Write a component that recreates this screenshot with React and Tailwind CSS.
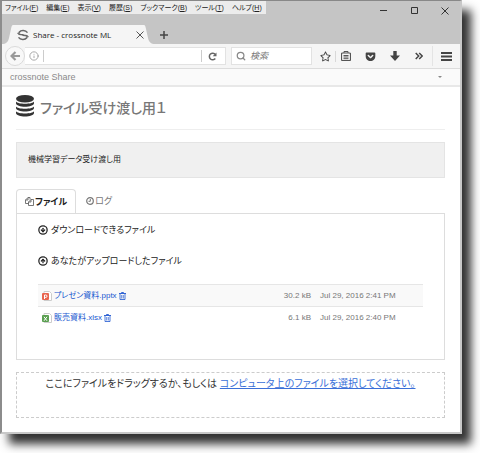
import { FaGetPocket, FaRegStar } from "react-icons/fa";
import { CircleArrowDown, CircleArrowUp, Info, Search } from "lucide-react";

const menus = [
  { label: "ファイル", accessKey: "F" },
  { label: "編集", accessKey: "E" },
  { label: "表示", accessKey: "V" },
  { label: "履歴", accessKey: "S" },
  { label: "ブックマーク", accessKey: "B" },
  { label: "ツール", accessKey: "T" },
  { label: "ヘルプ", accessKey: "H" },
];

const files = [
  { name: "プレゼン資料.pptx", type: "pptx", size: "30.2 kB", date: "Jul 29, 2016 2:41 PM" },
  { name: "販売資料.xlsx", type: "xlsx", size: "6.1 kB", date: "Jul 29, 2016 2:40 PM" },
];

function CrossnoteLogo() {
  return (
    <svg viewBox="0 0 12 12" className="w-3 h-3 shrink-0" fill="none" stroke="#666">
      <path d="M10.500 3.600C8.500 1 4 .8 2.200 3.300 1.400 4.600 2 5.400 3.600 5.600L6.500 5.800" strokeWidth="1.500" />
      <path d="M1.500 8.400c2 2.600 6.500 2.800 8.300.3.800-1.300.2-2.100-1.400-2.300l-2.900-.2" strokeWidth="1.500" />
      <path d="m.3 4.200 2 1.300M11.700 7.800l-2-1.300" />
    </svg>
  );
}

function DatabaseIcon() {
  return (
    <svg viewBox="0 0 18 22" className="w-[18px] h-[22px] shrink-0" fill="#333">
      <ellipse cx="9" cy="3.800" rx="9" ry="3.800" />
      <path d="M0 6.600c1.500 3 16.500 3 18 0v1.600c0 4.600-18 4.600-18 0z" />
      <path d="M0 11.400c1.500 3 16.500 3 18 0V13c0 4.600-18 4.600-18 0z" />
      <path d="M0 16.200c1.500 3 16.500 3 18 0v1.800c0 4.600-18 4.600-18 0z" />
    </svg>
  );
}

function CopyIcon() {
  return (
    <svg viewBox="0 0 9 9" className="w-[9px] h-[9px] shrink-0" fill="none" stroke="#555" strokeWidth=".8">
      <path d="M3.500 6.500h-3V3L3 .5h2v2M.5 3H3V.5" />
      <path d="M3.500 5 6 2.500h2.500v6h-5zM3.500 5H6V2.500" />
    </svg>
  );
}

function ClockIcon() {
  return (
    <svg viewBox="0 0 8 8" className="w-2 h-2 shrink-0" fill="none" stroke="currentColor">
      <circle cx="4" cy="4" r="3.300" strokeWidth="1.200" />
      <path d="M4.300 2v2.300H2.500" />
    </svg>
  );
}

function TrashIcon() {
  return (
    <svg viewBox="0 0 7 8" className="w-[7px] h-2" fill="none" stroke="currentColor">
      <path d="M0 1.500h7M2.500 1.500v-1h2v1" strokeWidth=".9" />
      <path d="M1 1.500v6h5v-6" strokeWidth=".8" />
      <path d="M2.700 3v3.500M4.300 3v3.500" strokeWidth=".7" />
    </svg>
  );
}

function FileTypeIcon({ type }) {
  const color = type === "pptx" ? "#e8654f" : "#5a9f50";
  return (
    <svg viewBox="0 0 10 10" className="w-[10px] h-[10px] shrink-0">
      <path d="M2 .5h5.500l2 2v7H2z" fill="#fff" stroke="#ccc" />
      <rect x="0" y="2" width="7" height="7" rx="1" fill={color} />
      {type === "pptx" ? (
        <path d="M2.500 8V4h1.300a1.200 1.200 0 0 1 0 2.400H2.500" fill="none" stroke="#fff" />
      ) : (
        <path d="m2 3.800 3 4M5 3.800l-3 4" fill="none" stroke="#fff" />
      )}
    </svg>
  );
}

function TitleBar() {
  return (
    <header className="flex justify-between items-start bg-[#c5c5c5]">
      <div>
        <nav className="flex w-max gap-2 h-[13px] items-center bg-[#ececec] pl-[3px] pr-1 text-[7px] leading-[12px] text-[#222]">
          {menus.map((menu) => (
            <button key={menu.label} type="button" className="whitespace-nowrap">
              {menu.label}(<u>{menu.accessKey}</u>)
            </button>
          ))}
        </nav>
        <div className="flex items-end mt-[11px]">
          <svg viewBox="0 0 11 19" className="w-[11px] h-[19px] shrink-0" fill="#f5f5f5">
            <path d="M11 0v19H0c4 0 6-2 7-6L9 4c.5-2.500 1-4 2-4z" />
          </svg>
          <div className="flex items-center h-[19px] w-[131px] bg-[#f5f5f5] pl-1 text-[8px] leading-[12px] text-[#222]">
            <CrossnoteLogo />
            <span className="ml-1 whitespace-nowrap font-['Open_Sans','Noto_Sans',sans-serif]">
              Share - crossnote ML
            </span>
            <button type="button" aria-label="Close tab" className="ml-auto">
              <svg viewBox="0 0 8 8" className="w-2 h-2" stroke="#555">
                <path d="m.5.500 7 7m0-7-7 7" />
              </svg>
            </button>
          </div>
          <svg viewBox="0 0 11 19" className="w-[11px] h-[19px] shrink-0" fill="#f5f5f5">
            <path d="M0 0v19h11c-4 0-6-2-7-6L2 4C1.500 1.500 1 0 0 0z" />
          </svg>
          <button type="button" aria-label="New tab" className="self-center ml-[5px]">
            <svg viewBox="0 0 8 8" className="w-2 h-2" stroke="#444" strokeWidth="1.500">
              <path d="M4 0v8M0 4h8" />
            </svg>
          </button>
        </div>
      </div>
      <div className="flex items-center gap-[23px] pt-[6px] pr-[11px]">
        <button type="button" aria-label="Minimize">
          <svg viewBox="0 0 8 8" className="w-2 h-2" stroke="#333">
            <path d="M1 3.500h7" />
          </svg>
        </button>
        <button type="button" aria-label="Maximize">
          <svg viewBox="0 0 8 8" className="w-2 h-2" fill="none" stroke="#333">
            <path d="M1.500.5h6v6h-6z" />
          </svg>
        </button>
        <button type="button" aria-label="Close window">
          <svg viewBox="0 0 8 8" className="w-2 h-2" stroke="#333">
            <path d="m.5.500 7 7m0-7-7 7" />
          </svg>
        </button>
      </div>
    </header>
  );
}

function Toolbar() {
  return (
    <div className="flex items-center h-[25px] bg-[#f5f5f5] border-b border-[#dcdcdc] pl-[3px] pr-2 text-[#444]">
      <button
        type="button"
        aria-label="Back"
        className="flex items-center justify-center w-5 h-5 shrink-0 rounded-full border border-[#dadada] bg-[#f8f8f8]"
      >
        <svg viewBox="0 0 10 10" className="w-[10px] h-[10px]" fill="none" stroke="#999" strokeWidth="2.200">
          <path d="M5.500 1 1.500 5l4 4M2 5h8" />
        </svg>
      </button>
      <div className="flex flex-1 min-w-0 items-center h-[18px] bg-white border-y border-r border-[#e2e2e2] pl-1 pr-2">
        <Info size={10} color="#999" className="shrink-0" />
        <input
          type="text"
          aria-label="Address"
          className="flex-1 min-w-0 h-3 ml-1 border-x border-[#ccc] outline-none text-[9px]"
        />
        <button type="button" aria-label="Reload" className="ml-[6px]">
          <svg viewBox="0 0 9 9" className="w-[9px] h-[9px]" fill="none" stroke="#666" strokeWidth="1.500">
            <path d="M7.300 6.500a3.300 3.300 0 1 1 0-4" />
            <path d="M8.500.5v3.800H4.700z" fill="#666" stroke="none" />
          </svg>
        </button>
      </div>
      <label className="flex items-center w-[81px] h-[18px] shrink-0 bg-white border border-[#e2e2e2] ml-[5px] pl-[4px]">
        <Search size={10} color="#888" strokeWidth={3} className="shrink-0" />
        <input
          type="search"
          aria-label="検索"
          placeholder="検索"
          className="w-full min-w-0 ml-1 text-[9px] leading-[12px] italic outline-none placeholder:text-[#777]"
        />
      </label>
      <button type="button" aria-label="Bookmark" className="ml-2 pr-[4px] border-r border-[#d8d8d8]">
        <FaRegStar size={11} />
      </button>
      <button type="button" aria-label="Bookmark list" className="ml-[5px]">
        <svg viewBox="0 0 10 10" className="w-[10px] h-[10px]" fill="none" stroke="#555">
          <rect x=".5" y="2" width="9" height="7.500" rx="1" strokeWidth="1.200" />
          <path d="M3 2V.5h4V2M2.500 4.500h5M2.500 6h5M2.500 7.700h5" />
        </svg>
      </button>
      <button type="button" aria-label="Pocket" className="ml-[14px]">
        <FaGetPocket size={11} />
      </button>
      <button type="button" aria-label="Downloads" className="ml-[14px]">
        <svg viewBox="0 0 10 10" className="w-[10px] h-[10px]" fill="#444">
          <path d="M3.300 0h3.400v4.500H10L5 10 0 4.500h3.300z" />
        </svg>
      </button>
      <button type="button" aria-label="More tools" className="ml-[15px]">
        <svg viewBox="0 0 8 8" className="w-2 h-2" fill="none" stroke="#444" strokeWidth="1.500">
          <path d="m.7 1 3 3-3 3M4.200 1l3 3-3 3" />
        </svg>
      </button>
      <button type="button" aria-label="Menu" className="h-5 ml-[9px] pl-[8px] border-l border-[#e4e4e4]">
        <svg viewBox="0 0 11 9" className="w-[11px] h-[9px]" stroke="#444" strokeWidth="2">
          <path d="M0 1h11M0 4.500h11M0 8h11" />
        </svg>
      </button>
    </div>
  );
}

function FileTable() {
  return (
    <table className="w-full text-[8px] leading-[12px] text-[#777]">
      <tbody>
        {files.map((file) => (
          <tr key={file.name} className="h-[22px] odd:bg-[#f9f9f9] odd:border-y border-[#e6e6e6]">
            <td className="pl-1">
              <div className="flex items-center gap-[2px] text-[#2058d0]">
                <FileTypeIcon type={file.type} />
                <a href="#file" className="whitespace-nowrap">
                  {file.name}
                </a>
                <button type="button" aria-label={`Delete ${file.name}`}>
                  <TrashIcon />
                </button>
              </div>
            </td>
            <td className="w-[60px] text-right whitespace-nowrap">{file.size}</td>
            <td className="w-[112px] pl-[9px] whitespace-nowrap">{file.date}</td>
          </tr>
        ))}
      </tbody>
    </table>
  );
}

export default function App() {
  return (
    <div className="min-h-screen overflow-hidden bg-white pr-[18px] pb-[19px] font-['Liberation_Sans','Noto_Sans_CJK_JP',sans-serif] [font-feature-settings:'palt']">
      <div className="bg-white border-t border-l-2 border-r-2 border-b-2 border-t-[#888] border-l-[#8c8c8c] border-r-[#c8c8c8] border-b-[#c8c8c8] shadow-[9px_10px_9px_#333]">
        <TitleBar />
        <Toolbar />

        {/* Site header */}
        <div className="flex items-center justify-between h-[18px] bg-[#fafafa] border-b-2 border-[#e8e8e8] pl-2 pr-[18px] text-[9px] leading-[12px] text-[#8a8a8a]">
          <a href="#home">crossnote Share</a>
          <button type="button" aria-label="Account menu">
            <svg viewBox="0 0 4 2" className="w-1 h-[2px]" fill="#888">
              <path d="M0 0h4L2 2z" />
            </svg>
          </button>
        </div>

        <main className="pl-[14px] pr-[15px] pb-[14px]">
          <h1 className="flex items-center gap-[6px] h-[43px] pb-1 border-b border-[#eee] text-[14px] leading-[20px] font-medium text-[#777]">
            <DatabaseIcon />
            <span className="pt-1">ファイル受け渡し用１</span>
          </h1>

          <p className="mt-3 px-[11px] py-[11px] bg-[#f0f0f0] border border-[#e4e4e4] text-[8px] leading-[12px] text-[#222]">
            機械学習データ受け渡し用
          </p>

          {/* Tabs */}
          <div role="tablist" className="flex mt-[11px] text-[9px] leading-[12px]">
            <button
              type="button"
              role="tab"
              aria-selected="true"
              className="flex items-center gap-px h-6 px-2 border border-b-0 border-[#ddd] rounded-t-sm font-bold text-[#222]"
            >
              <CopyIcon />
              ファイル
            </button>
            <button
              type="button"
              role="tab"
              aria-selected="false"
              className="flex items-center gap-px h-6 px-[10px] text-[#777]"
            >
              <ClockIcon />
              ログ
            </button>
          </div>

          <section className="px-[21px] pt-[9px] pb-[30px] border border-[#ddd] text-[9px] leading-[14px] text-[#222]">
            <h2 className="flex items-center gap-[3px]">
              <CircleArrowDown size={10} strokeWidth={3} />
              ダウンロードできるファイル
            </h2>
            <h2 className="flex items-center gap-[3px] mt-[17px] mb-4">
              <CircleArrowUp size={10} strokeWidth={3} />
              あなたがアップロードしたファイル
            </h2>
            <FileTable />
          </section>

          {/* Drop area */}
          <div className="mt-3 pt-1 pb-[26px] border border-dashed border-[#ccc] text-center text-[10px] leading-[14px] text-[#333]">
            ここにファイルをドラッグするか、もしくは{" "}
            <a href="#select" className="underline text-[#3a6fd8]">
              コンピュータ上のファイルを選択してください。
            </a>
          </div>
        </main>
      </div>
    </div>
  );
}
